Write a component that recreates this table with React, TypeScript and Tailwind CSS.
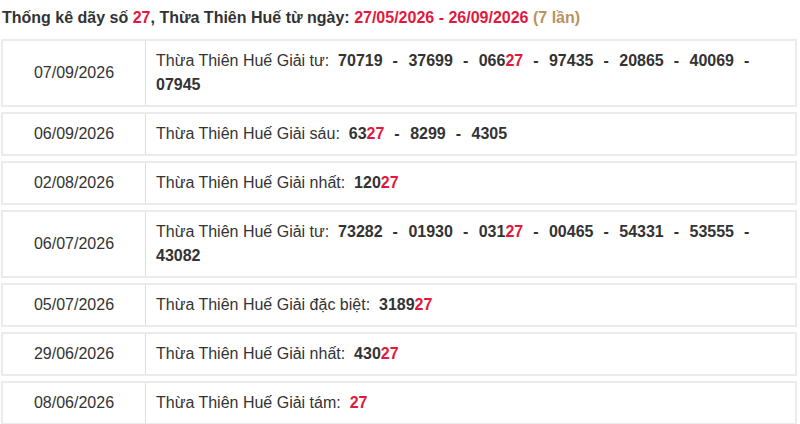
const rows: { date: string; prize: string; nums: string[] }[] = [
  { date: '07/09/2026', prize: 'Giải tư', nums: ['70719', '37699', '06627', '97435', '20865', '40069', '07945'] },
  { date: '06/09/2026', prize: 'Giải sáu', nums: ['6327', '8299', '4305'] },
  { date: '02/08/2026', prize: 'Giải nhất', nums: ['12027'] },
  { date: '06/07/2026', prize: 'Giải tư', nums: ['73282', '01930', '03127', '00465', '54331', '53555', '43082'] },
  { date: '05/07/2026', prize: 'Giải đặc biệt', nums: ['318927'] },
  { date: '29/06/2026', prize: 'Giải nhất', nums: ['43027'] },
  { date: '08/06/2026', prize: 'Giải tám', nums: ['27'] },
]

const Num = ({ value }: { value: string }) =>
  value.endsWith('27') ? (
    <span className="font-bold">
      {value.slice(0, -2)}
      <span className="text-[#e3183c]">27</span>
    </span>
  ) : (
    <span className="font-bold">{value}</span>
  )

export default function App() {
  return (
    <div className="w-[800px] h-[424px] overflow-hidden bg-white text-[16px] leading-[24px] text-[#333] font-['Liberation_Sans',Arial,sans-serif]">
      <div className="pt-[6px] pl-[2px] mb-[9px] font-bold">
        Thống kê dãy số <span className="text-[#e3183c]">27</span>, Thừa Thiên Huế từ ngày:{' '}
        <span className="text-[#e3183c]">27/05/2026 - 26/09/2026</span>{' '}
        <span className="text-[#b8935e]">(7 lần)</span>
      </div>
      <div className="ml-[1px] w-[796px] flex flex-col gap-[5px]">
        {rows.map((r) => (
          <div key={r.date} className="flex border-2 border-[#ebebeb]">
            <div className="w-[143px] shrink-0 flex items-center justify-center border-r border-[#dedede]">
              {r.date}
            </div>
            <div className="flex-1 py-[8px] pl-[10px] pr-[8px]">
              Thừa Thiên Huế {r.prize}:&nbsp;{' '}
              {r.nums.map((n, i) => (
                <span key={i}>
                  <Num value={n} />
                  {i < r.nums.length - 1 && (
                    <>
                      <span className="font-bold ml-[10px] mr-[6px]">-</span>{' '}
                    </>
                  )}
                </span>
              ))}
            </div>
          </div>
        ))}
      </div>
    </div>
  )
}
